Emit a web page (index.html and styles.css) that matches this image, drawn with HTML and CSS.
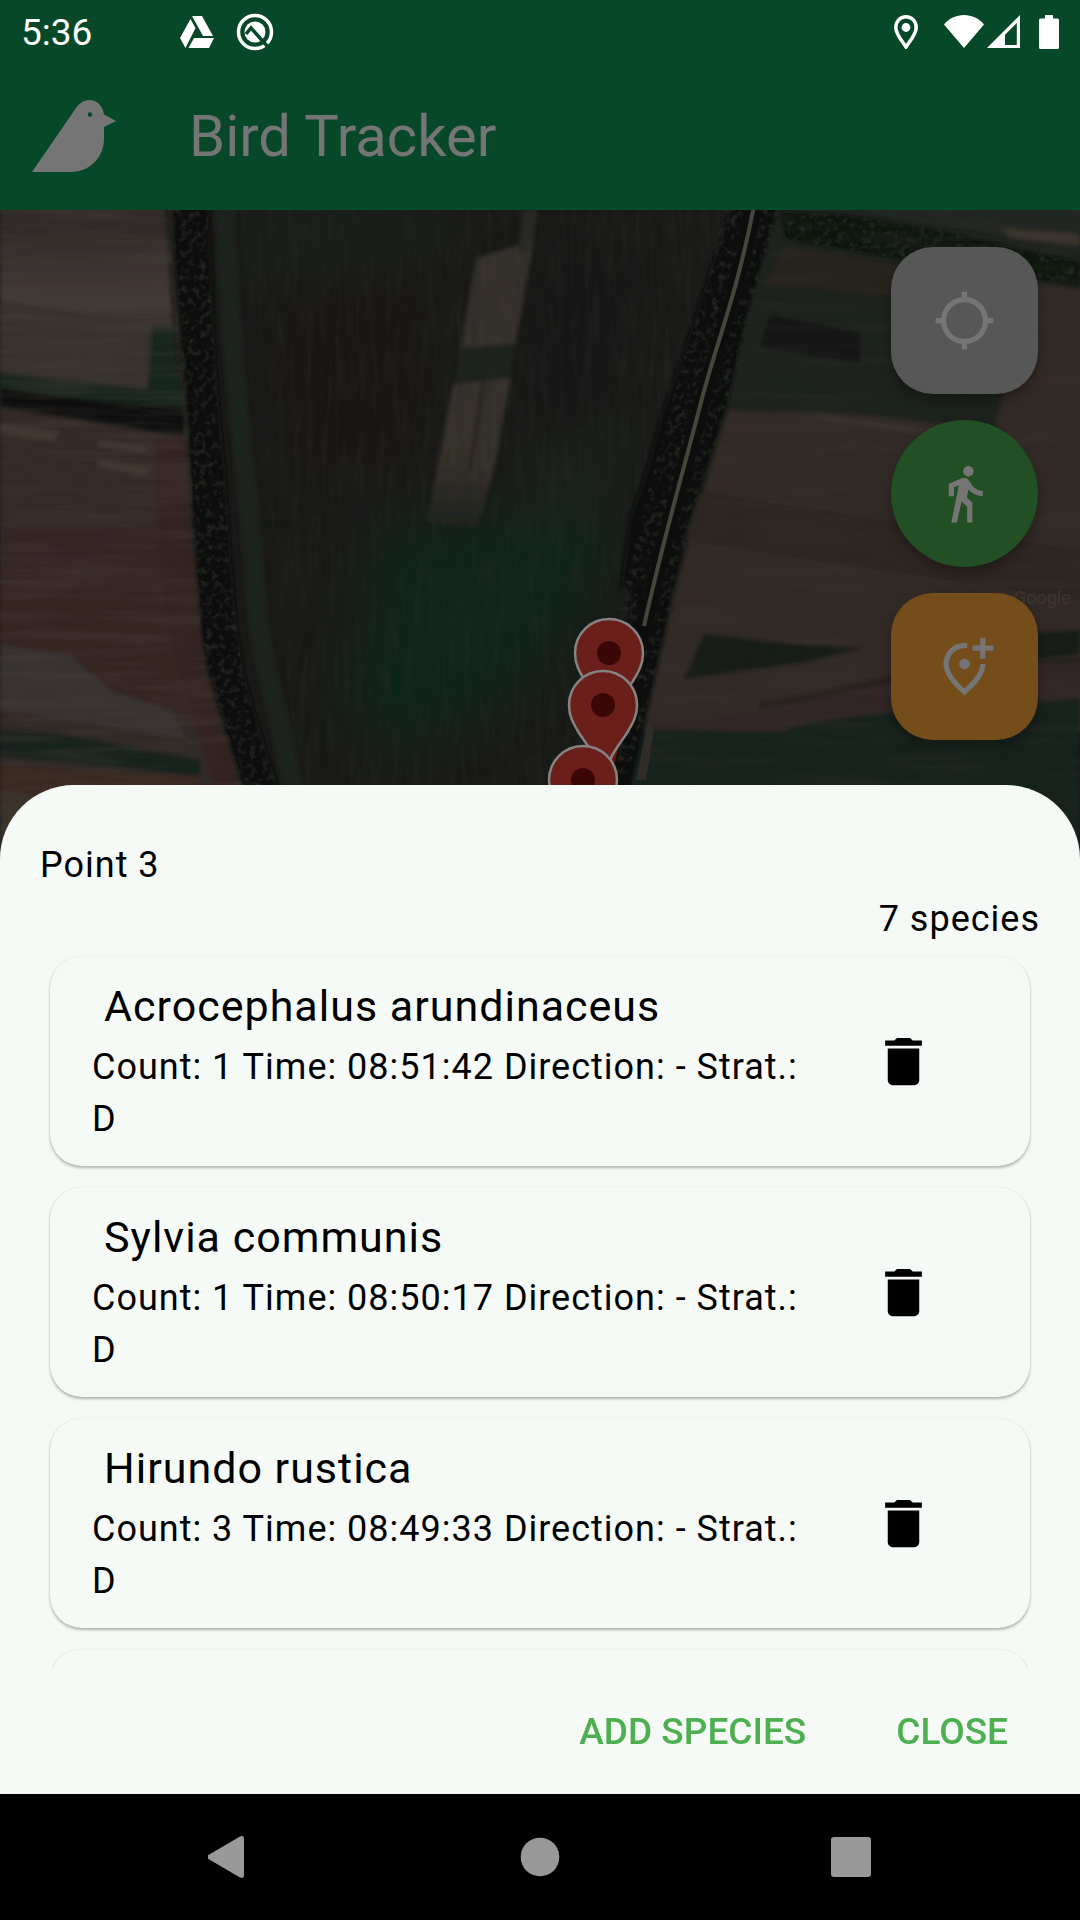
FILE: index.html
```html
<!DOCTYPE html>
<html lang="en">
<head>
<meta charset="utf-8">
<meta name="viewport" content="width=device-width, initial-scale=1">
<title>Bird Tracker</title>
<link rel="stylesheet" href="styles.css">
</head>
<body>
<div class="screen">
  <header class="header">
    <div class="status">
      <span class="status-time">5:36</span>
      <div class="status-apps">
        <svg width="34" height="32" viewBox="0 0 34 32" fill="#fff" aria-hidden="true"><path d="M12 0h10l11 20H23z"/><path d="M10.500 3l5 9L5.500 32 0 22z"/><path d="M14 22h20l-5 10H8.500z"/></svg>
        <svg width="38" height="38" viewBox="0 0 38 38" fill="none" aria-hidden="true"><circle cx="19" cy="19" r="16.500" stroke="#fff" stroke-width="3.500"/><circle cx="19" cy="19" r="10.500" fill="#fff"/><path d="M10 21l5-6 17 19" stroke="#074829" stroke-width="3.500"/></svg>
      </div>
      <div class="status-system">
        <svg class="status-pin" width="24" height="34" viewBox="0 0 24 34" aria-hidden="true"><path d="M12 1.800C6 1.800 1.800 6.500 1.800 12.500c0 7 6 13 10.200 19.500 4.200-6.500 10.200-12.500 10.200-19.500C22.200 6.500 18 1.800 12 1.800z" fill="none" stroke="#fff" stroke-width="3.500"/><circle cx="12" cy="12.500" r="4.400" fill="#fff"/></svg>
        <svg width="40" height="33" viewBox="0 0 40 33" fill="#fff" aria-hidden="true"><path d="M20 33L0 9.500C5 3.500 12 0 20 0s15 3.500 20 9.500z"/></svg>
        <svg class="status-signal" width="33" height="33" viewBox="0 0 33 33" aria-hidden="true"><path fill="#fff" fill-rule="evenodd" d="M33 0v33H0zM29.800 8L18 19.800V30h11.800z"/></svg>
        <svg width="20" height="34" viewBox="0 0 20 34" fill="#fff" aria-hidden="true"><path d="M6 0h8v3.500h4.500A1.500 1.500 0 0 1 20 5v27.500a1.500 1.500 0 0 1-1.500 1.500h-17A1.500 1.500 0 0 1 0 32.500V5a1.500 1.500 0 0 1 1.500-1.500H6z"/></svg>
      </div>
    </div>
    <div class="appbar">
      <svg width="84" height="72" viewBox="0 0 84 72" aria-hidden="true"><path fill="#757575" fill-rule="evenodd" d="M0 72L45 6.500C49 2 53 0 57 0c8 0 14 6 15 14.500L84 21l-12 6v12c0 19-15 33-33 33zM58 12.300a2.300 2.300 0 1 0 0 4.600 2.300 2.300 0 0 0 0-4.600z"/></svg>
      <h1 class="appbar-title">Bird Tracker</h1>
    </div>
  </header>

  <section class="map" aria-label="Map">
    <svg class="map-image" viewBox="0 210 1080 660" preserveAspectRatio="xMidYMin slice" aria-hidden="true">
      <defs>
        <filter id="soft" x="-5%" y="-5%" width="110%" height="110%"><feGaussianBlur stdDeviation="2"/></filter>
        <filter id="blur" x="-50%" y="-50%" width="200%" height="200%" color-interpolation-filters="sRGB"><feGaussianBlur stdDeviation="24"/></filter>
        <filter id="rows" x="0" y="0" width="100%" height="100%" color-interpolation-filters="sRGB"><feTurbulence type="fractalNoise" baseFrequency="0.008 0.090" numOctaves="3" seed="4"/><feColorMatrix values="0 0 0 0 0.28  0 0 0 0 0.25  0 0 0 0 0.23  2.400 0 0 0 -0.950"/><feComposite in2="SourceGraphic" operator="in"/></filter>
        <filter id="furrows" x="0" y="0" width="100%" height="100%" color-interpolation-filters="sRGB"><feTurbulence type="fractalNoise" baseFrequency="0.140 0.020" numOctaves="3" seed="9"/><feColorMatrix values="0 0 0 0 0.15  0 0 0 0 0.17  0 0 0 0 0.14  2.400 0 0 0 -1"/><feComposite in2="SourceGraphic" operator="in"/></filter>
        <filter id="trees" x="-20%" y="-20%" width="140%" height="140%" color-interpolation-filters="sRGB"><feTurbulence type="fractalNoise" baseFrequency="0.160" numOctaves="3" seed="2"/><feColorMatrix values="0 0 0 0 0.13  0 0 0 0 0.15  0 0 0 0 0.13  3 0 0 0 -1.400"/><feComposite in2="SourceGraphic" operator="in"/></filter>
        <linearGradient id="fieldTop" x1="0" y1="0" x2="0" y2="1"><stop offset="0" stop-color="#2f2827"/><stop offset=".4" stop-color="#372f2d"/><stop offset=".8" stop-color="#443b37"/><stop offset="1" stop-color="#352e2b"/></linearGradient>
        <linearGradient id="fieldLow" x1="0" y1="0" x2="0" y2="1"><stop offset="0" stop-color="#352a27"/><stop offset=".6" stop-color="#352723"/><stop offset=".75" stop-color="#322b29"/><stop offset="1" stop-color="#352822"/></linearGradient>
        <linearGradient id="strip" x1="0" y1="0" x2="0" y2="1"><stop offset="0" stop-color="#3a332f"/><stop offset=".6" stop-color="#36302c"/><stop offset="1" stop-color="#1f231d"/></linearGradient>
        <g id="marker"><path d="M0-34a34 34 0 0 0-34 34c0 11 4 18 10 28C-13 44-6 52-3 68a3 3 0 0 0 6 0C6 52 13 44 24 28 30 18 34 11 34 0A34 34 0 0 0 0-34z" fill="#6b1f1a" stroke="#858383" stroke-width="2.500"/><circle r="12" fill="#3a0706"/></g>
      </defs>
      <rect y="210" width="1080" height="660" fill="#191a18"/>
      <g filter="url(#soft)">
        <path d="M0 200h165l8 130L0 302z" fill="url(#fieldTop)"/>
        <path d="M0 300l155 24-5 66L0 374z" fill="#38322e"/>
        <path d="M152 325l20 2 12 80-184-14v-20l148 16z" fill="#15251a"/>
        <path d="M0 388l186 27v20L0 406z" fill="#100f11"/>
        <path d="M0 408l188 30 6 105 12 100 40 150 10 80H0z" fill="url(#fieldLow)"/>
        <path d="M0 424l60 8-6 10-54-8zM100 440l45 6v6l-48-5zM98 460l54 8-10 8-45-10z" fill="#433833"/>
        <path d="M156 438l32 2 6 100 14 100 38 150-24 20-50-160-14-90z" fill="#352420"/>
        <path d="M0 645l70 10 40 35 60 20 18 30-188-30z" fill="#393230"/>
        <path d="M0 730l60 4 140 26v16L0 756z" fill="#18201a"/>
        <path d="M0 765l200 12v40H0z" fill="#3b2920"/>
        <path d="M0 790l60 10v70H0z" fill="#3a302b"/>
      </g>
      <g filter="url(#blur)">
        <path d="M380 530l160-20 80 20-40 90-70 80-110 50-50-40z" fill="#10261a"/>
        <path d="M270 300l150-20 10 40-20 150-120 10z" fill="#1b1616"/>
        <path d="M250 210h200l-20 40-170 20z" fill="#1b211b"/>
        <path d="M540 450l90-30-30 90-80 10z" fill="#1b231b"/>
        <path d="M550 260h70l-30 160h-60z" fill="#181516"/>
      </g>
      <g filter="url(#soft)">
        <path d="M225 200c4 120 12 200 22 290s6 120 20 180 22 90 32 150" fill="none" stroke="#1f231d" stroke-width="20"/>
        <path d="M190 200c4 100 10 200 16 260s8 170 24 230 24 80 40 130" fill="none" stroke="#0f1110" stroke-width="36"/>
        <path d="M170 200c4 120 14 190 16 230s6 120 10 180 20 100 46 180" fill="none" stroke="#292721" stroke-width="3"/>
        <path d="M206 430c2 100 8 130 10 200s16 90 42 150" fill="none" stroke="#07080b" stroke-width="7"/>
        <path d="M476 258l58-18-19 106-54 2z" fill="#37312d"/>
        <path d="M524 210h14l-8 40-12 4z" fill="#2c2a25"/>
        <path d="M460 348l56-4-6 34-55 8z" fill="#1b211b"/>
        <path d="M453 384l58-6-18 96-16 54-50-6z" fill="url(#strip)"/>
        <path d="M482 380l4 0-14 90-4 0z" fill="#25241f"/>
      </g>
      <g filter="url(#soft)">
        <path d="M775 200h310v230l-390 60z" fill="#1c201b"/>
        <path d="M785 245l120 20 90 20-10 20-220-20z" fill="#26221f"/>
        <path d="M1035 284l50 5v200l-90-65z" fill="#332a27"/>
        <path d="M780 212c110 0 190 28 300 50v26l-100-16-195-32z" fill="#0f1511"/>
        <path d="M840 209h240v40l-80-14z" fill="#202822"/>
        <path d="M1000 228l80 6v12l-70-8z" fill="#3b342d"/>
        <path d="M770 315l90 18v30l-100-16z" fill="#181715"/>
        <path d="M728 410l150 6 130 16 30-60 50 10v350l-440 40-10-60z" fill="#322a27"/>
        <path d="M690 490l390 60v50l-400-60z" fill="#2e2624"/>
        <path d="M815 413l120 16-20 5-100-14z" fill="#37322b"/>
        <path d="M704 634l110 12 50 2-60 15-120 16z" fill="#151c17"/>
        <path d="M640 723c190-2 300-80 440-60v40c-200-15-240 45-440 34z" fill="#302825"/>
        <path d="M1000 634l80-4v24l-90 10z" fill="#181e19"/>
        <path d="M760 706c90-14 160-44 320-46" fill="none" stroke="#25211e" stroke-width="6"/>
        <path d="M640 730l140 2c50-20 150-20 300-34v180H610z" fill="#13231b"/>
        <path d="M733 200l47 0-34 120-20 90-38 120-24 110-36 160H600l30-110 0-120 0-40 30-110 44-130z" fill="#0f1110"/>
        <path d="M733 200l-30 110-44 130-30 80-8 70 30-10 60-180 50-200z" fill="#0f1110"/>
      </g>
      <g opacity=".4">
        <path d="M0 210h168l20 220 14 200 42 160v80H0z" filter="url(#rows)"/>
        <path d="M780 210h300v660H630l40-230z" filter="url(#rows)" opacity=".4"/>
        <path d="M240 210h490l-100 300-40 290H300z" filter="url(#furrows)"/>
      </g>
      <g filter="url(#trees)">
        <path d="M190 200c4 100 10 200 16 260s8 170 24 230 24 80 40 130" fill="none" stroke="#fff" stroke-width="34"/>
        <path d="M736 206c-20 100-36 130-54 200s-36 130-56 220" fill="none" stroke="#fff" stroke-width="22"/>
        <path d="M772 206c-20 100-36 130-54 200s-36 130-56 220l-50 170" fill="none" stroke="#fff" stroke-width="18"/>
        <path d="M780 212c110 0 190 28 300 50v26l-100-16-195-32z" fill="#fff"/>
      </g>
      <path d="M754 206c-20 100-36 130-54 200s-36 130-56 220" fill="none" stroke="#47453c" stroke-width="4"/>
      <path d="M648 720l6 10-8 50h-10z" fill="#302d26"/>
      <text class="map-credit" x="1014" y="604">Google</text>
      <path d="M604 775l14-38 2 4-10 40z" fill="#6e1712"/>
      <use href="#marker" x="609" y="653"/>
      <use href="#marker" x="603" y="705"/>
      <use href="#marker" x="583" y="780"/>
    </svg>
    <div class="map-actions">
      <button class="fab fab-locate" type="button" aria-label="My location"><svg class="icon" viewBox="0 0 24 24" aria-hidden="true"><path d="M20.940 11c-.46-4.170-3.770-7.480-7.940-7.940V1h-2v2.060C6.830 3.520 3.520 6.830 3.060 11H1v2h2.060c.46 4.170 3.770 7.480 7.940 7.940V23h2v-2.060c4.170-.46 7.480-3.770 7.940-7.940H23v-2h-2.060zM12 19c-3.870 0-7-3.130-7-7s3.130-7 7-7 7 3.130 7 7-3.130 7-7 7z"/></svg></button>
      <button class="fab fab-walk" type="button" aria-label="Start walking"><svg class="icon" viewBox="0 0 24 24" aria-hidden="true"><path d="M13.500 5.500c1.100 0 2-.9 2-2s-.9-2-2-2-2 .9-2 2 .9 2 2 2zM9.800 8.900L7 23h2.100l1.800-8 2.100 2v6h2v-7.500l-2.100-2 .6-3C14.800 12 16.800 13 19 13v-2c-1.900 0-3.500-1-4.300-2.400l-1-1.600c-.4-.6-1-1-1.700-1-.3 0-.5.100-.8.100L6 8.300V13h2V9.600l1.800-.7"/></svg></button>
      <button class="fab fab-add" type="button" aria-label="Add point"><svg class="icon" viewBox="0 0 24 24" aria-hidden="true"><path d="M20 1v3h3v2h-3v3h-2V6h-3V4h3V1h2zm-8 12c1.100 0 2-.9 2-2s-.9-2-2-2-2 .9-2 2 .9 2 2 2zm1-9.940v2.020A6.200 6.200 0 0 0 12 5c-3.350 0-6 2.570-6 6.200 0 2.340 1.950 5.440 6 9.140 4.050-3.700 6-6.790 6-9.140V11h2v.2c0 3.320-2.670 7.250-8 11.800-5.330-4.550-8-8.480-8-11.800C4 6.220 7.800 3 12 3c.34 0 .67.020 1 .06z"/></svg></button>
    </div>
  </section>

  <main class="sheet">
    <h2 class="sheet-title">Point 3</h2>
    <p class="sheet-count">7 species</p>
    <ul class="species-list">
      <li class="card">
        <div class="card-text">
          <h3 class="card-title">Acrocephalus arundinaceus</h3>
          <p class="card-detail">Count: 1 Time: 08:51:42 Direction: - Strat.: D</p>
        </div>
        <button class="card-delete" type="button" aria-label="Delete Acrocephalus arundinaceus"><svg class="icon" viewBox="0 0 24 24" aria-hidden="true"><path d="M6 19c0 1.100.9 2 2 2h8c1.100 0 2-.9 2-2V7H6v12zM19 4h-3.500l-1-1h-5l-1 1H5v2h14V4z"/></svg></button>
      </li>
      <li class="card">
        <div class="card-text">
          <h3 class="card-title">Sylvia communis</h3>
          <p class="card-detail">Count: 1 Time: 08:50:17 Direction: - Strat.: D</p>
        </div>
        <button class="card-delete" type="button" aria-label="Delete Sylvia communis"><svg class="icon" viewBox="0 0 24 24" aria-hidden="true"><path d="M6 19c0 1.100.9 2 2 2h8c1.100 0 2-.9 2-2V7H6v12zM19 4h-3.500l-1-1h-5l-1 1H5v2h14V4z"/></svg></button>
      </li>
      <li class="card">
        <div class="card-text">
          <h3 class="card-title">Hirundo rustica</h3>
          <p class="card-detail">Count: 3 Time: 08:49:33 Direction: - Strat.: D</p>
        </div>
        <button class="card-delete" type="button" aria-label="Delete Hirundo rustica"><svg class="icon" viewBox="0 0 24 24" aria-hidden="true"><path d="M6 19c0 1.100.9 2 2 2h8c1.100 0 2-.9 2-2V7H6v12zM19 4h-3.500l-1-1h-5l-1 1H5v2h14V4z"/></svg></button>
      </li>
      <li class="card card-next"></li>
    </ul>
    <div class="sheet-actions">
      <button class="text-button" type="button">ADD SPECIES</button>
      <button class="text-button" type="button">CLOSE</button>
    </div>
  </main>

  <nav class="navbar" aria-label="System">
    <button class="nav-button" type="button" aria-label="Back"><svg width="42" height="42" viewBox="0 0 42 42" aria-hidden="true"><path d="M0 19.300L32 .500q4-1.500 4 2v37q0 3.500-4 2L0 22.700q-2-1.700 0-3.400z"/></svg></button>
    <button class="nav-button" type="button" aria-label="Home"><svg width="42" height="42" viewBox="0 0 42 42" aria-hidden="true"><circle cx="21" cy="21" r="19.300"/></svg></button>
    <button class="nav-button" type="button" aria-label="Recent apps"><svg width="42" height="42" viewBox="0 0 42 42" aria-hidden="true"><rect x="1" y="1" width="40" height="40" rx="3"/></svg></button>
  </nav>
</div>
</body>
</html>
```
FILE: styles.css
```css
* {
  box-sizing: border-box;
}

body,
h1,
h2,
h3,
p,
ul {
  margin: 0;
  padding: 0;
  font-weight: 400;
}

body {
  font-family: Roboto, "Noto Sans", sans-serif;
  color: #000;
  background: #000;
}

button {
  border: 0;
  padding: 0;
  background: none;
  color: inherit;
  font: inherit;
}

svg {
  display: block;
}

.screen {
  display: flex;
  flex-direction: column;
  height: 100vh;
}

/* Status bar and app bar */
.header {
  background: #074829;
}

.status {
  display: flex;
  align-items: center;
  height: 63px;
  padding: 0 21px;
  color: #fff;
}

.status-time {
  font-size: 37px;
  line-height: 44px;
  padding-top: 2px;
}

.status-apps,
.status-system {
  display: flex;
  align-items: center;
}

.status-apps {
  gap: 22px;
  margin-left: 88px;
}

.status-system {
  margin-left: auto;
}

.status-pin {
  margin-right: 26px;
}

.status-signal {
  margin: 0 19px 0 3px;
}

.appbar {
  display: flex;
  align-items: center;
  gap: 73px;
  height: 147px;
  padding: 0 32px 2px;
}

.appbar-title {
  font-size: 58px;
  line-height: 68px;
  color: #757575;
}

/* Map */
.map {
  display: grid;
  flex: none;
  height: 655px;
}

.map-image,
.map-actions {
  grid-area: 1 / 1;
}

.map-image {
  width: 100%;
  height: 655px;
}

.map-credit {
  font-size: 18px;
  fill: #40352f;
}

.map-actions {
  z-index: 1;
  display: flex;
  flex-direction: column;
  justify-self: end;
  gap: 26px;
  padding: 37px 42px;
}

.fab {
  display: grid;
  place-items: center;
  width: 147px;
  height: 147px;
  border-radius: 42px;
  color: #757575;
  box-shadow: 0 6px 12px rgba(0, 0, 0, 0.3);
}

.fab-locate {
  background: #575757;
}

.fab-walk {
  background: #225024;
  border-radius: 50%;
}

.fab-add {
  background: #744d1b;
}

.icon {
  width: 63px;
  height: 63px;
  fill: currentColor;
}

/* Bottom sheet */
.sheet {
  z-index: 2;
  display: flex;
  flex: 1;
  flex-direction: column;
  min-height: 0;
  margin-top: -80px;
  padding-top: 53px;
  border-radius: 74px 74px 0 0;
  background: #f5faf6;
}

.sheet-title,
.sheet-count {
  padding: 0 40px;
  font-size: 36px;
  line-height: 54px;
  letter-spacing: 1px;
}

.sheet-count {
  text-align: right;
}

.species-list {
  display: flex;
  flex: 1;
  flex-direction: column;
  gap: 21px;
  min-height: 0;
  padding: 10px 50px 0;
  overflow: hidden;
  list-style: none;
}

.card {
  display: flex;
  flex: none;
  align-items: center;
  gap: 24px;
  padding: 21px 64px 21px 42px;
  border-radius: 32px;
  background: #f5faf6;
  box-shadow: 0 0 1px rgba(0, 0, 0, 0.15), 0 2px 3px rgba(0, 0, 0, 0.28);
}

.card-next {
  height: 210px;
}

.card-text {
  display: flex;
  flex: 1;
  flex-direction: column;
  gap: 6px;
}

.card-title {
  padding-left: 12px;
  font-size: 43px;
  line-height: 58px;
  letter-spacing: 1px;
}

.card-detail {
  font-size: 36px;
  line-height: 52px;
  letter-spacing: 1px;
}

.card-delete {
  display: grid;
  place-items: center;
  width: 126px;
  height: 126px;
}

.sheet-actions {
  display: flex;
  flex: none;
  align-items: center;
  justify-content: flex-end;
  gap: 26px;
  height: 126px;
  padding: 2px 40px 0;
}

.text-button {
  padding: 0 32px;
  font-size: 37px;
  font-weight: 500;
  line-height: 84px;
  color: #4caf50;
}

/* System navigation */
.navbar {
  display: flex;
  flex: none;
  align-items: center;
  justify-content: center;
  gap: 185px;
  height: 126px;
  background: #000;
}

.nav-button {
  display: grid;
  place-items: center;
  width: 126px;
  height: 126px;
  fill: #999;
}
```
